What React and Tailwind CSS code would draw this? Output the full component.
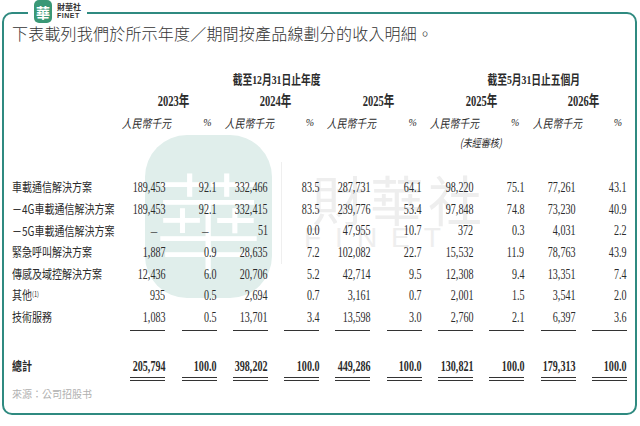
import React from 'react';

const serif = { fontFamily: '"Liberation Serif", "Noto Sans CJK TC", serif' };
const cjk = { fontFamily: '"Noto Sans CJK TC", "Noto Sans CJK SC", sans-serif' };

const rows = [
  ['車載通信解決方案', '189,453', '92.1', '332,466', '83.5', '287,731', '64.1', '98,220', '75.1', '77,261', '43.1'],
  ['－4G車載通信解決方案', '189,453', '92.1', '332,415', '83.5', '239,776', '53.4', '97,848', '74.8', '73,230', '40.9'],
  ['－5G車載通信解決方案', '–', '–', '51', '0.0', '47,955', '10.7', '372', '0.3', '4,031', '2.2'],
  ['緊急呼叫解決方案', '1,887', '0.9', '28,635', '7.2', '102,082', '22.7', '15,532', '11.9', '78,763', '43.9'],
  ['傳感及域控解決方案', '12,436', '6.0', '20,706', '5.2', '42,714', '9.5', '12,308', '9.4', '13,351', '7.4'],
  ['其他', '935', '0.5', '2,694', '0.7', '3,161', '0.7', '2,001', '1.5', '3,541', '2.0'],
  ['技術服務', '1,083', '0.5', '13,701', '3.4', '13,598', '3.0', '2,760', '2.1', '6,397', '3.6'],
];

const total = ['總計', '205,794', '100.0', '398,202', '100.0', '449,286', '100.0', '130,821', '100.0', '179,313', '100.0'];

const years = ['2023年', '2024年', '2025年', '2025年', '2026年'];

const grid = 'grid grid-cols-[102px_repeat(10,51.3px)]';

function Num({ v, bold }) {
  if (v === '–') {
    return <div className="flex justify-end pr-[8px] text-[13px]" style={serif}>–</div>;
  }
  return (
    <div className="flex justify-end">
      <span className={`inline-block whitespace-nowrap origin-right scale-x-[0.72] text-[14px] ${bold ? 'font-bold' : ''}`} style={serif}>{v}</span>
    </div>
  );
}

function Label({ text, bold }) {
  return (
    <div className="flex items-center">
      <span className={`inline-block whitespace-nowrap origin-left scale-x-[0.8] text-[12.5px] ${bold ? 'font-bold' : ''}`} style={cjk}>
        {text}
        {text === '其他' && <sup className="text-[7px]">(1)</sup>}
      </span>
    </div>
  );
}

function Watermark() {
  return (
    <div className="absolute inset-0 pointer-events-none">
      {/* big logo blob */}
      <div className="absolute left-[145px] top-[135px] w-[127px] h-[163px] rounded-[42px] bg-[#e0eeeb] flex items-center justify-center">
        <span className="text-[108px] font-light text-white leading-none" style={cjk}>華</span>
      </div>
      <div className="absolute left-[281px] top-[162px] w-px h-[102px] bg-[#efefef]" />
      <div className="absolute left-[312px] top-[172px] text-[54px] leading-none tracking-[4px] text-[#eeeeee]" style={cjk}>財華社</div>
      <div className="absolute left-[304px] top-[224px] text-[28px] leading-none tracking-[14px] text-[#eeeeee]" style={{ fontFamily: '"Liberation Sans", sans-serif' }}>FINET</div>
    </div>
  );
}

function Logo() {
  return (
    <div className="absolute left-[28px] top-0 h-[26px] px-[6px] bg-white flex items-start gap-[5px] z-20">
      <div className="w-[18px] h-[23px] rounded-[5px] bg-[#3a9876] flex items-center justify-center">
        <span className="text-[14px] font-bold text-white leading-none" style={cjk}>華</span>
      </div>
      <div className="flex flex-col pt-[3px] leading-none">
        <span className="text-[8px] font-bold text-[#333]" style={cjk}>財華社</span>
        <span className="text-[7px] font-bold text-[#333] tracking-[0.5px] mt-[1px]" style={{ fontFamily: '"Liberation Sans", sans-serif' }}>FINET</span>
      </div>
    </div>
  );
}

export default function App() {
  return (
    <div className="relative w-[640px] h-[426px] bg-white overflow-hidden text-[#2b2b2b]">
      <Logo />
      <div className="mt-[12px] ml-[2px] w-[635px] h-[403px] border-2 border-[#2f8a80] rounded-[10px] relative">
        <div className="absolute -left-[4px] -top-[14px] w-[640px] h-[426px]">
          <Watermark />
        </div>
        <div className="relative z-10 pl-[8px]">
          <div className="h-[38px] flex items-center text-[16px] font-light text-[#333] tracking-[0.2px]" style={cjk}>
            下表載列我們於所示年度／期間按產品線劃分的收入明細。
          </div>

          {/* period headers */}
          <div className={`${grid} mt-[18px] h-[20px] items-center`}>
            <div />
            <div className="col-span-6 flex justify-center pl-[18px]">
              <span className="inline-block whitespace-nowrap origin-center scale-x-[0.75] text-[13px] font-bold" style={serif}>截至12月31日止年度</span>
            </div>
            <div className="col-span-4 flex justify-center pl-[18px]">
              <span className="inline-block whitespace-nowrap origin-center scale-x-[0.75] text-[13px] font-bold" style={serif}>截至5月31日止五個月</span>
            </div>
          </div>

          {/* years */}
          <div className={`${grid} h-[21px] items-center`}>
            <div />
            {years.map((y, i) => (
              <div key={i} className="col-span-2 flex justify-center pl-[16px]">
                <span className="inline-block whitespace-nowrap origin-center scale-x-[0.7] text-[15px] font-bold" style={serif}>{y}</span>
              </div>
            ))}
          </div>

          {/* units */}
          <div className={`${grid} h-[23px] items-center`}>
            <div />
            {years.map((y, i) => (
              <React.Fragment key={i}>
                <div className="flex justify-end -mr-[6px]">
                  <span className="inline-block whitespace-nowrap origin-right scale-x-[0.82] text-[12px] italic" style={cjk}>人民幣千元</span>
                </div>
                <div className="flex justify-end pr-[5px]">
                  <span className="text-[10px] italic" style={serif}>%</span>
                </div>
              </React.Fragment>
            ))}
          </div>

          {/* unaudited */}
          <div className={`${grid} h-[14px] items-center`}>
            <div className="col-span-7" />
            <div className="col-span-2 flex justify-center pl-[16px]">
              <span className="inline-block whitespace-nowrap origin-center scale-x-[0.82] text-[11px] italic" style={cjk}>(未經審核)</span>
            </div>
          </div>

          {/* data rows */}
          <div className="mt-[29px]">
            {rows.map((r, i) => (
              <div key={i} className={`${grid} h-[21.6px] items-center`}>
                <Label text={r[0]} />
                {r.slice(1).map((v, j) => <Num key={j} v={v} />)}
              </div>
            ))}
          </div>

          {/* single rule */}
          <div className={`${grid} h-[6px]`}>
            <div />
            {total.slice(1).map((_, j) => (
              <div key={j} className="flex justify-end">
                <div className="w-[35px] h-px bg-[#333] mt-[2px]" />
              </div>
            ))}
          </div>

          {/* total */}
          <div className={`${grid} mt-[21px] h-[22px] items-center`}>
            <Label text={total[0]} bold />
            {total.slice(1).map((v, j) => <Num key={j} v={v} bold />)}
          </div>

          {/* double rule */}
          <div className={`${grid} h-[4px]`}>
            <div />
            {total.slice(1).map((_, j) => (
              <div key={j} className="flex justify-end">
                <div className="w-[35px] h-[4px] border-y border-[#333]" />
              </div>
            ))}
          </div>

          <div className="mt-[3px] h-[18px] flex items-center text-[10px] text-[#b0b0b0]" style={cjk}>
            來源：公司招股书
          </div>
        </div>
      </div>
    </div>
  );
}
